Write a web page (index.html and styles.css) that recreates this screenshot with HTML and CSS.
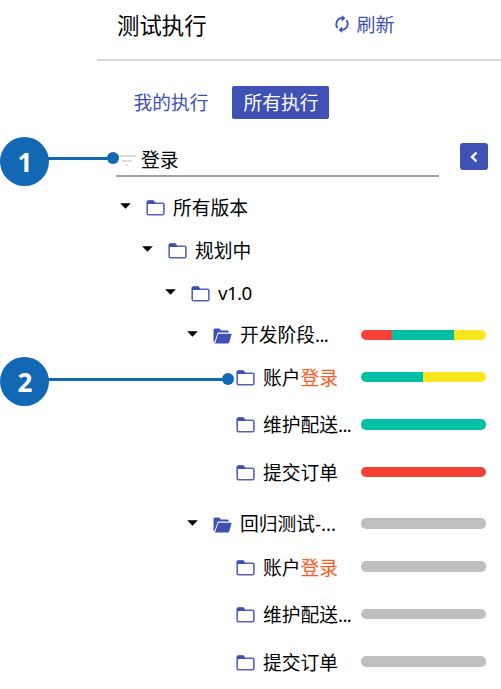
FILE: index.html
```
<!DOCTYPE html>
<html lang="zh-CN">
<head>
<meta charset="utf-8">
<title>测试执行</title>
<link rel="stylesheet" href="styles.css">
</head>
<body>
<svg class="defs" aria-hidden="true">
  <symbol id="folder" viewBox="0 0 19 16"><path d="M1.2 4V2.4Q1.2 1.1 2.5 1.1H7L8.8 3.2H16.7Q17.9 3.2 17.9 4.4V13.4Q17.9 14.7 16.6 14.7H2.5Q1.2 14.7 1.2 13.4Z" fill="none" stroke="#5a60b8" stroke-width="1.6"/><path d="M1 4V2.2Q1 .6 2.5.6H7.2L9.2 3V4Z" fill="#3f51b5"/></symbol>
  <symbol id="folder-open" viewBox="0 0 19 16"><path d="M.5 14V2Q.5.5 2 .5H6.2L8.2 2.6H14.5Q15.8 2.6 15.8 4V4.6H4.8L1.7 13.5Z" fill="#3f51b5"/><path d="M5.3 5.8H18.7L16.3 14.3Q16 15.4 14.8 15.4H2Z" fill="#3f51b5"/></symbol>
  <symbol id="caret" viewBox="0 0 11 6"><path d="M.2.2H10.8L5.5 5.8Z" fill="#000"/></symbol>
</svg>
<main class="panel">
  <header class="header">
    <h1 class="title">测试执行</h1>
    <a class="refresh"><svg class="refresh-icon" viewBox="0 0 16 18"><g fill="none" stroke="#3f51b5" stroke-width="1.7"><path d="M3.6 13A6 6 0 0 1 8 3.2H9.5"/><path d="M12.4 5A6 6 0 0 1 8 14.8H6.5"/></g><path d="M7.8 0L11.4 3.2L7.8 6.4ZM8.2 11.6L4.6 14.8L8.2 18Z" fill="#3f51b5"/></svg><span>刷新</span></a>
  </header>
  <nav class="tabs"><a class="tab">我的执行</a><a class="tab active">所有执行</a></nav>
  <div class="search">
    <div class="field"><svg class="filter" viewBox="0 0 18 12"><path d="M0 1H18M4 6H14M7.5 10H10.5" stroke="#d2d2d2" stroke-width="1.7"/></svg><span>登录</span></div>
    <button class="collapse" aria-label="收起"><svg class="chevron" viewBox="0 0 8 12"><path d="M6.5 1.5L2 6L6.5 10.5" fill="none" stroke="#fff" stroke-width="2.4"/></svg></button>
  </div>
  <div class="tree">
    <div class="row l0"><svg class="caret"><use href="#caret"/></svg><svg class="folder"><use href="#folder"/></svg><span class="label">所有版本</span></div>
    <div class="row l1"><svg class="caret"><use href="#caret"/></svg><svg class="folder"><use href="#folder"/></svg><span class="label">规划中</span></div>
    <div class="row l2"><svg class="caret"><use href="#caret"/></svg><svg class="folder"><use href="#folder"/></svg><span class="label"><span class="latin">v1.0</span></span></div>
    <section class="group">
      <div class="row l3"><svg class="caret"><use href="#caret"/></svg><svg class="folder"><use href="#folder-open"/></svg><span class="label">开发阶段<span class="dots">...</span></span><div class="bar"><i class="red q1"></i><i class="teal q2"></i><i class="yellow q1"></i></div></div>
      <div class="row l4"><svg class="folder"><use href="#folder"/></svg><span class="label">账户<em>登录</em></span><div class="bar"><i class="teal q2"></i><i class="yellow q2"></i></div></div>
      <div class="row l4"><svg class="folder"><use href="#folder"/></svg><span class="label">维护配送<span class="dots">...</span></span><div class="bar thick"><i class="teal q4"></i></div></div>
      <div class="row l4"><svg class="folder"><use href="#folder"/></svg><span class="label">提交订单</span><div class="bar"><i class="red q4"></i></div></div>
    </section>
    <section class="group second">
      <div class="row l3"><svg class="caret"><use href="#caret"/></svg><svg class="folder"><use href="#folder-open"/></svg><span class="label">回归测试<span class="dots wide">-...</span></span><div class="bar thick"><i class="gray q4"></i></div></div>
      <div class="row l4"><svg class="folder"><use href="#folder"/></svg><span class="label">账户<em>登录</em></span><div class="bar thick"><i class="gray q4"></i></div></div>
      <div class="row l4"><svg class="folder"><use href="#folder"/></svg><span class="label">维护配送<span class="dots">...</span></span><div class="bar"><i class="gray q4"></i></div></div>
      <div class="row l4"><svg class="folder"><use href="#folder"/></svg><span class="label">提交订单</span><div class="bar thick"><i class="gray q4"></i></div></div>
    </section>
  </div>
</main>
<div class="callout one"><b>1</b></div>
<div class="callout two"><b>2</b></div>
</body>
</html>
```
FILE: styles.css
```
* { box-sizing: border-box; }
body {
  margin: 0;
  width: 501px;
  height: 689px;
  overflow: hidden;
  position: relative;
  background: #fff;
  color: #000;
  font: 18.75px/28px "Noto Sans CJK SC", sans-serif;
}
svg { display: block; flex: none; }
.defs { position: absolute; width: 0; height: 0; }
.panel { margin-left: 97px; }
.header {
  display: flex;
  align-items: center;
  height: 61px;
  padding: 0 0 12px 20px;
  border-bottom: 2px solid #d8d8d8;
}
.title { margin: 0; width: 217px; font-size: 22.4px; font-weight: 400; }
.refresh { display: flex; align-items: center; gap: 6.5px; color: #3f51b5; font-size: 19px; }
.refresh-icon { width: 16px; height: 18px; }
.tabs { display: flex; gap: 13px; padding: 25px 0 0 25.4px; }
.tab { height: 33px; line-height: 32px; padding: 0 11px; color: #3f51b5; border-radius: 2px; }
.active { background: #3f51b5; color: #fff; }
.search { display: flex; align-items: flex-start; height: 68px; padding: 24px 0 0 19px; }
.field {
  display: flex;
  align-items: center;
  gap: 5px;
  width: 323px;
  height: 34px;
  padding-left: 2px;
  border-bottom: 2px solid #a0a0a0;
}
.filter { width: 18px; height: 12px; margin-top: 4px; }
.collapse {
  display: flex;
  align-items: center;
  justify-content: center;
  width: 28px;
  height: 27px;
  margin-left: 21.4px;
  padding: 0;
  border: 0;
  border-radius: 3px;
  background: #3f51b5;
}
.chevron { width: 8px; height: 12px; margin-top: 1px; }
.row { display: flex; align-items: center; height: 40px; margin-bottom: 3px; }
.l0 { padding-left: 23px; }
.l1 { padding-left: 45px; }
.l2 { padding-left: 68px; margin-bottom: 2px; }
.l3 { padding-left: 90px; }
.l4 { padding-left: 139px; margin-bottom: 7.5px; }
.group:not(.second) .l3 { margin-bottom: 2px; }
.second { margin-top: 12px; }
.second .l3 { margin-bottom: 3px; }
.group .l4:last-child { margin-bottom: 0; }
.caret { width: 11px; height: 6px; margin: 0 15px 3px 0; }
.folder { width: 19px; height: 16px; margin: 1px 8px 0 0; }
.label { white-space: nowrap; margin-bottom: 1px; }
.label em { color: #ff5a1f; font-style: normal; }
.latin { font-family: "Noto Sans", sans-serif; letter-spacing: -0.6px; }
.dots { font-family: "Noto Sans", sans-serif; letter-spacing: -0.6px; }
.wide { letter-spacing: 0; }
.bar {
  display: flex;
  width: 125px;
  height: 10px;
  margin: 0 15.5px 1px auto;
  border-radius: 5px;
  overflow: hidden;
}
.thick { height: 11px; }
.q1 { width: 25%; }
.q2 { width: 50%; }
.q4 { width: 100%; }
.red { background: #f44336; }
.teal { background: #00bfa5; }
.yellow { background: #f8e71c; }
.gray { background: #bfbfbf; }
.callout {
  position: absolute;
  left: 0;
  width: 49px;
  height: 49px;
  border-radius: 50%;
  background: #1268b3;
  color: #fff;
  text-align: center;
  font: 26px/51px "Open Sans", sans-serif;
  padding-left: 1px;
}
.callout::before, .callout::after { content: ""; position: absolute; background: #1268b3; }
.callout::before { left: 47px; height: 3px; }
.callout::after { width: 12px; height: 12px; border-radius: 50%; }
.one { top: 137px; }
.one::before { top: 20px; width: 66px; }
.one::after { left: 107px; top: 15px; }
.two { top: 357px; }
.two::before { top: 21px; width: 181px; }
.two::after { left: 222px; top: 16px; }
```
